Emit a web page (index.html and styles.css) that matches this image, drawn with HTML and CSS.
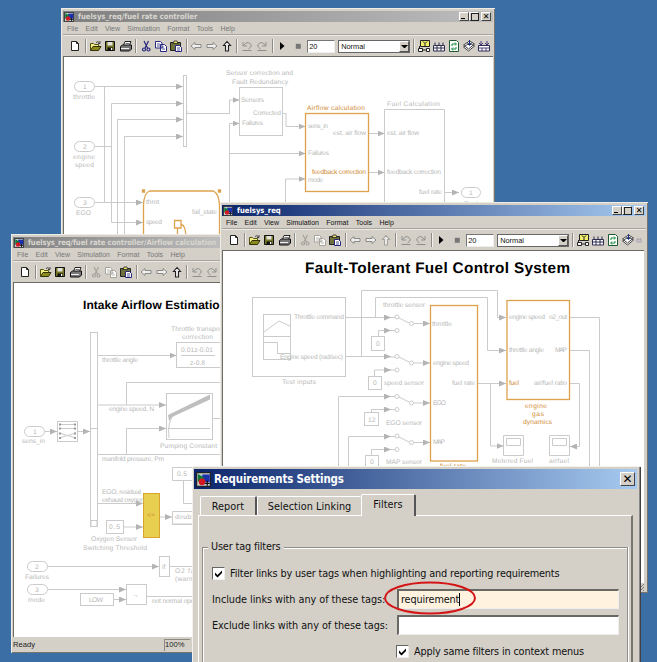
FILE: index.html
```html
<!DOCTYPE html>
<html lang="en">
<head>
<meta charset="utf-8">
<title>Requirements Settings</title>
<link rel="stylesheet" href="styles.css">
</head>
<body>
<svg class="sprite" width="0" height="0">
  <defs>
    <marker id="arr" viewBox="0 0 7 6" refX="7" refY="3" markerWidth="7" markerHeight="6" markerUnits="userSpaceOnUse" orient="auto"><path d="M0 0L7 3L0 6Z" fill="#b4b4b4"/></marker>
    <symbol id="logo" viewBox="0 0 12 12"><path d="M.5.5h11v11H.5z" fill="#c8d0d0" stroke="#222"/><path d="M5 2h6v6H5z" fill="#1c2fae"/><path d="M1.500 1.500L7 4.500L1.500 8Z" fill="#087a38"/><circle cx="4.800" cy="7.800" r="2.700" fill="#d51822"/><path d="M9 7v4M7 9h4" stroke="#111"/></symbol>
    <symbol id="new" viewBox="0 0 14 14"><path d="M3.500 2.500h5l2 2v7h-7z" fill="#fff" stroke="#222"/><path d="M8.500 2.500v2h2" fill="none" stroke="#222"/></symbol>
    <symbol id="open" viewBox="0 0 14 14"><path d="M2.500 11V4.500h3l1 1h4V7" fill="#f5ef8a" stroke="#55550a"/><path d="M2.500 11.500L5 7.500h8l-2.500 4z" fill="#8d8b1c" stroke="#33330a"/><path d="M8 3.500q2-2 3.500.5M12 2v2.500h-2" fill="none" stroke="#222" stroke-width=".8"/></symbol>
    <symbol id="save" viewBox="0 0 14 14"><path d="M2.500 2.500h9v9h-9z" fill="#75752a" stroke="#111"/><path d="M4.500 3h5v3.500h-5z" fill="#e4e4dc"/><path d="M4.500 8.500h5.500v3H4.500z" fill="#111"/><path d="M8 9h1.300v2H8z" fill="#fff"/></symbol>
    <symbol id="print" viewBox="0 0 14 14"><path d="M4.500 6.500l1.500-4h6l-1.500 4" fill="#fff" stroke="#222"/><path d="M6.500 4.500h4" stroke="#333" stroke-width=".7"/><path d="M1.500 7.500l2-1.500h9v4l-2 2h-9z" fill="#777" stroke="#111"/><path d="M2 9.500h8" stroke="#eee"/></symbol>
    <symbol id="cut" viewBox="0 0 14 14"><path d="M5 2l3.500 7M9.500 2L6 9" stroke="currentColor" fill="none" stroke-width="1.200"/><circle cx="5" cy="10.500" r="1.500" fill="none" stroke="currentColor" stroke-width="1.200"/><circle cx="9.500" cy="10.500" r="1.500" fill="none" stroke="currentColor" stroke-width="1.200"/></symbol>
    <symbol id="copy" viewBox="0 0 14 14"><path d="M1.500 2.500h5l1.500 1.500v5h-6.500zM6.500 5.500h4l2 2v5h-6z" fill="#fff" stroke="currentColor"/><path d="M3 5h3M3 7h3M8 8h2M8 10h3" stroke="currentColor" stroke-width=".8"/></symbol>
    <symbol id="paste" viewBox="0 0 14 14"><path d="M1.500 3.500h10v8h-10z" fill="#6f6f3b" stroke="#222"/><path d="M4 4.500L5 2h3l1 2.500z" fill="#e8e26a" stroke="#222" stroke-width=".8"/><path d="M6.500 6.500h4l2 2v4h-6z" fill="#fff" stroke="#26267e"/><path d="M8 9h3M8 11h3" stroke="#26267e" stroke-width=".8"/></symbol>
    <symbol id="left" viewBox="0 0 14 14"><path d="M2 7l4-3.500v2h6v3H6v2z" fill="#eee" stroke="#8a8a86" stroke-width="1"/></symbol>
    <symbol id="right" viewBox="0 0 14 14"><path d="M12 7L8 3.500v2H2v3h6v2z" fill="#eee" stroke="#8a8a86" stroke-width="1"/></symbol>
    <symbol id="up" viewBox="0 0 14 14"><path d="M7 2.500L3.500 6.500h2v5.500h3V6.500h2z" fill="#eee" stroke="currentColor" stroke-width="1.100"/></symbol>
    <symbol id="undo" viewBox="0 0 14 14"><path d="M3 3v4h4M3.500 6.500Q7 2 10 4.500T8.500 10M2.500 11.500h9" fill="none" stroke="#8f8f8b"/></symbol>
    <symbol id="redo" viewBox="0 0 14 14"><path d="M11 3v4H7M10.500 6.500Q7 2 4 4.500T5.500 10M2.500 11.500h9" fill="none" stroke="#8f8f8b"/></symbol>
    <symbol id="play" viewBox="0 0 14 14"><path d="M5 3l4.500 4L5 11z" fill="#000"/></symbol>
    <symbol id="stop" viewBox="0 0 14 14"><path d="M4.800 4.800h5v5h-5z" fill="#777"/></symbol>
    <symbol id="lib" viewBox="0 0 14 14"><path d="M3.500 1.500h9v6h-9z" fill="#f4ef6a" stroke="#222"/><path d="M6 2.500l2 2 2-2M8 4.500V7M2.500 7v3" fill="none" stroke="#222"/><path d="M1.500 9.500h4v3h-4zM9.500 9.500h3v3h-3z" fill="#fff" stroke="#222"/><path d="M5.500 11h4" stroke="#222"/></symbol>
    <symbol id="build" viewBox="0 0 14 14"><path d="M1.500 6.500h11v5.500h-11z" fill="#fff" stroke="#2c2c52"/><path d="M1.500 9h11M5 6.500V12M9 6.500V12M3 3.500v3M7 3.500v3M11 3.500v3" stroke="#2c2c52" fill="none"/></symbol>
    <symbol id="refresh" viewBox="0 0 14 14"><path d="M2.500 1.500h7l2 2v9h-9z" fill="#fff" stroke="#1c5a30"/><path d="M5 7V5h4M8 3.500L9.500 5 8 6.500M9 8v2H5M6 8.500L4.500 10 6 11.500" fill="none" stroke="#128a38"/></symbol>
    <symbol id="model" viewBox="0 0 14 14"><path d="M1.500 8l5 4 6-5-5-3zM1.500 6l5 4 6-5-5-3z" fill="#fff" stroke="#444"/><path d="M7.500 1v5M5.500 4.500l2 2 2-2" stroke="#1b2f82" fill="none"/></symbol>
    <symbol id="debug" viewBox="0 0 14 14"><path d="M1.500 6.500h11v5.500h-11z" fill="#fff" stroke="#2c2c52"/><path d="M1.500 9h11M5 9v3M9 9v3M4 2v4M2 4l2 2 2-2M10 2v4M8 4l2 2 2-2" stroke="#4b3c7c" fill="none"/></symbol>
  </defs>
</svg>

<main class="desktop">

<section class="window win-controller inactive">
  <header class="titlebar"><svg class="logo"><use href="#logo"/></svg><h2>fuelsys_req/fuel rate controller</h2>
    <div class="buttons"><i class="min"></i><i class="max"></i><i class="close"></i></div></header>
  <nav class="menu"><span>File</span><span>Edit</span><span>View</span><span>Simulation</span><span>Format</span><span>Tools</span><span>Help</span></nav>
  <div class="toolbar">
    <svg><use href="#new"/></svg><b></b>
    <svg><use href="#open"/></svg><svg><use href="#save"/></svg><svg><use href="#print"/></svg><b></b>
    <svg class="ink"><use href="#cut"/></svg><svg class="ink"><use href="#copy"/></svg><svg><use href="#paste"/></svg><b></b>
    <svg><use href="#left"/></svg><svg><use href="#right"/></svg><svg><use href="#up"/></svg><b></b>
    <svg><use href="#undo"/></svg><svg><use href="#redo"/></svg><b></b>
    <svg><use href="#play"/></svg><svg><use href="#stop"/></svg>
    <span class="time">20</span><span class="mode">Normal<i></i></span><b></b>
    <svg><use href="#lib"/></svg><svg><use href="#build"/></svg><svg><use href="#refresh"/></svg><svg><use href="#model"/></svg><svg><use href="#debug"/></svg>
  </div>
  <div class="canvas">
  <svg class="diagram" width="429" height="190" viewBox="64 57 429 190">
    <g class="wire">
      <rect x="74.500" y="81.500" width="20" height="10" rx="5"/><rect x="74.500" y="141.500" width="20" height="10" rx="5"/><rect x="74.500" y="197.500" width="20" height="10" rx="5"/><rect x="461.500" y="187.500" width="19" height="10" rx="5"/>
      <rect x="183.500" y="75.500" width="3" height="71"/>
      <rect x="239.500" y="87.500" width="43" height="48"/>
      <path d="M384.500 240V109.500h60V240"/>
      <path d="M104.500 86.500v116M95 146.500h16.500M229.500 123v112M187 111v2.500h43M117.500 119v116M124.500 136v99"/>
      <g class="flow">
        <path d="M95 86.500h88"/><path d="M111.500 222V103.500h71.500"/><path d="M117.500 119.500h65.500"/><path d="M124.500 136.500h58.500"/>
        <path d="M229.500 113.500v-13.500h10"/><path d="M229.500 153v-29.500h10"/><path d="M283 113.500h3v13h19.500"/><path d="M229.500 153.500h76"/><path d="M285.500 235v-56h20"/>
        <path d="M369 133.500h15.500"/><path d="M369 172.500h15.500"/><path d="M445 192.500h14"/><path d="M95 202.500h48"/><path d="M111.500 104v118.500h31.500"/>
      </g>
    </g>
    <g class="marked"><rect x="305.500" y="113.500" width="63" height="78"/><path d="M143.500 240V205Q144 193 149.500 191H213.500Q219 194 219.500 205V240M174.500 220.500h6.500v7.500h-6.500zM177.500 228v10M181.500 224.500q4 1 4.500 12"/><path d="M142.500 190h2v2h-2zM218.500 190h2v2h-2z" class="solid"/></g>
    <g class="label">
      <text x="83" y="89">1</text><text x="83" y="149">2</text><text x="83" y="205">3</text><text x="469" y="195">1</text>
      <text x="73" y="99" textLength="22">throttle</text><text x="73" y="159" textLength="22">engine</text><text x="75" y="167" textLength="19">speed</text><text x="76" y="215" textLength="15">EGO</text>
      <text x="226" y="75" textLength="67">Sensor correction and</text><text x="232" y="84" textLength="56">Fault Redundancy</text>
      <text x="241" y="102" textLength="23">Sensors</text><text x="253" y="115" textLength="28">Corrected</text><text x="242" y="125" textLength="21">Failures</text>
      <text x="308" y="128" textLength="20">sens_in</text><text x="333" y="135" textLength="33">est. air flow</text><text x="308" y="155" textLength="21">Failures</text><text x="308" y="182" textLength="15">mode</text>
      <text x="387" y="106" textLength="53">Fuel Calculation</text><text x="387" y="135" textLength="32">est. air flow</text><text x="387" y="174" textLength="54">feedback correction</text><text x="419" y="194" textLength="23">fuel rate</text><text x="464" y="206" textLength="14">Fuel</text>
      <text x="146" y="204" textLength="13">throt</text><text x="146" y="224" textLength="16">speed</text><text x="192" y="214" textLength="25">fail_state</text>
      <g class="hot"><text x="307" y="110" textLength="58">Airflow calculation</text><text x="312" y="174" textLength="54">feedback correction</text></g>
    </g>
  </svg>
  </div>
</section>

<section class="window win-airflow inactive">
  <header class="titlebar"><svg class="logo"><use href="#logo"/></svg><h2>fuelsys_req/fuel rate controller/Airflow calculation</h2></header>
  <nav class="menu"><span>File</span><span>Edit</span><span>View</span><span>Simulation</span><span>Format</span><span>Tools</span><span>Help</span></nav>
  <div class="toolbar">
    <svg><use href="#new"/></svg><b></b>
    <svg><use href="#open"/></svg><svg><use href="#save"/></svg><svg><use href="#print"/></svg><b></b>
    <svg class="off"><use href="#cut"/></svg><svg class="off"><use href="#copy"/></svg><svg><use href="#paste"/></svg><b></b>
    <svg><use href="#left"/></svg><svg><use href="#right"/></svg><svg><use href="#up"/></svg><b></b>
    <svg><use href="#undo"/></svg><svg><use href="#redo"/></svg>
  </div>
  <div class="canvas">
  <svg class="diagram" width="210" height="354" viewBox="14 283 210 354">
    <g class="wire">
      <rect x="90.500" y="332.500" width="7" height="194"/><rect x="176.500" y="342.500" width="60" height="25"/><path d="M181 355.500h34"/>
      <rect x="24.500" y="426.500" width="20" height="10" rx="5"/><rect x="27.500" y="561.500" width="20" height="10" rx="5"/><rect x="27.500" y="584.500" width="20" height="10" rx="5"/>
      <rect x="57.500" y="421.500" width="20" height="20"/><path d="M59 424.500h17M59 428.500h17M59 433l17 5M59 438l17-5M90 428.500h7"/>
      <path d="M59 424.500h2M59 428.500h2M59 433.500h2M59 438h2M74 424.500h2M74 428.500h2M74 433.500h2M74 438h2" class="dots"/>
      <rect x="166.500" y="393.500" width="46" height="46"/><path d="M168 428.500h42M169 438q-2-18 6-24M213 418.500h10M97 454.500h126M126.500 405V382.500H223"/>
      <path d="M168 415L210 394.500v5L172 417l-3 4z" class="fill"/>
      <path d="M220 467.500h-47.500v13H220M183.500 481v22.500H192M220 511.500h-47.500v13H220M192 524h-20"/>
      <rect x="106.500" y="520.500" width="17" height="13"/><rect x="91" y="520.500" width="6" height="6"/><rect x="159.500" y="556.500" width="10" height="20"/><path d="M170 566.500h30M147 596.500h53"/>
      <rect x="126.500" y="584.500" width="20" height="20"/><rect x="80.500" y="593.500" width="33" height="12"/>
      <g class="flow"><path d="M97 355.500h79.500"/><path d="M45 431.500h12"/><path d="M78 431.500h12"/><path d="M97 405h69"/><path d="M126.500 454V428.500H166"/><path d="M97 503.500h46"/><path d="M160 517h12"/><path d="M124 527h19"/><path d="M48 566.500h111"/><path d="M48 589.500h78"/><path d="M114 599.500h12"/></g>
    </g>
    <rect x="143.500" y="493.500" width="16" height="44" class="yellow"/>
    <text class="heading" x="83" y="309" textLength="144" font-size="12">Intake Airflow Estimation</text>
    <g class="label">
      <text x="102" y="362" textLength="36">throttle angle</text><text x="171" y="331" textLength="53">Throttle transport</text><text x="182" y="339" textLength="31">correction</text>
      <text x="181" y="352" textLength="32">0.01z-0.01</text><text x="190" y="365" textLength="15">z-0.8</text>
      <text x="33" y="434">1</text><text x="35" y="569">2</text><text x="35" y="592">3</text>
      <text x="22" y="443" textLength="23">sens_in</text><text x="109" y="411" textLength="45">engine speed, N</text><text x="160" y="448" textLength="57">Pumping Constant</text><text x="102" y="461" textLength="62">manifold pressure, Pm</text>
      <text x="177" y="476" textLength="10">0.5</text><text x="102" y="494" textLength="39">EGO, residual</text><text x="102" y="502" textLength="42">exhaust oxygen</text><text x="175" y="519" textLength="22">double</text>
      <text x="109" y="529" textLength="11">0.5</text><text x="91" y="541" textLength="46">Oxygen Sensor</text><text x="83" y="550" textLength="64">Switching Threshold</text>
      <text x="25" y="579" textLength="24">Failures</text><text x="28" y="602" textLength="17">mode</text><text x="89" y="602" textLength="14">LOW</text><text x="162" y="569">if</text><text x="132" y="597">→</text>
      <text x="175" y="573" textLength="24">O2 fail</text><text x="175" y="581" textLength="30">(warmup)</text><text x="152" y="603" textLength="58">not normal operation</text>
      <g class="hot"><text x="147" y="517">&lt;=</text></g>
    </g>
  </svg>
  </div>
  <footer class="status"><span>Ready</span><span class="zoom">100%</span></footer>
</section>

<section class="window win-root">
  <header class="titlebar"><svg class="logo"><use href="#logo"/></svg><h2>fuelsys_req</h2>
    <div class="buttons"><i class="min"></i><i class="max"></i><i class="close"></i></div></header>
  <nav class="menu"><span>File</span><span>Edit</span><span>View</span><span>Simulation</span><span>Format</span><span>Tools</span><span>Help</span></nav>
  <div class="toolbar">
    <svg><use href="#new"/></svg><b></b>
    <svg><use href="#open"/></svg><svg><use href="#save"/></svg><svg><use href="#print"/></svg><b></b>
    <svg class="off"><use href="#cut"/></svg><svg class="off"><use href="#copy"/></svg><svg><use href="#paste"/></svg><b></b>
    <svg><use href="#left"/></svg><svg><use href="#right"/></svg><svg class="off"><use href="#up"/></svg><b></b>
    <svg><use href="#undo"/></svg><svg><use href="#redo"/></svg><b></b>
    <svg><use href="#play"/></svg><svg><use href="#stop"/></svg>
    <span class="time">20</span><span class="mode">Normal<i></i></span><b></b>
    <svg><use href="#lib"/></svg><svg><use href="#build"/></svg><svg><use href="#refresh"/></svg><svg><use href="#model"/></svg><svg class="partial"><use href="#debug"/></svg>
  </div>
  <div class="canvas">
  <svg class="diagram" width="421" height="330" viewBox="223 251 421 330">
    <g class="wire">
      <rect x="252.500" y="297.500" width="93" height="79"/><rect x="263.500" y="314.500" width="27" height="45"/><path d="M263.500 336.500h27M264 332l15-11 11 5M264 342.500h13.500v11h13"/>
      <path d="M338.500 480V396.500h47M348.500 480V436.500h37M589.500 480V350.500H570M599.500 480V317.500H570"/>
      <rect x="371.500" y="336.500" width="13" height="14"/><rect x="368.500" y="376.500" width="13" height="13"/><rect x="364.500" y="412.500" width="14" height="13"/><rect x="365.500" y="455.500" width="13" height="14"/>
      <path d="M389 317.500h6M399 318l10 5M389 330.500h6M389 357h6M399 357l10 5M389 370h6M389 396.500h6M399 397l10 5M389 409.500h6M389 436.500h6M399 437l10 5M389 449.500h6"/>
      <circle cx="397" cy="317" r="2"/><circle cx="411.500" cy="323.500" r="2"/><circle cx="397" cy="330.500" r="2"/><circle cx="397" cy="356.500" r="2"/><circle cx="411.500" cy="363" r="2"/><circle cx="397" cy="370" r="2"/><circle cx="397" cy="396.500" r="2"/><circle cx="411.500" cy="403" r="2"/><circle cx="397" cy="409.500" r="2"/><circle cx="397" cy="436" r="2"/><circle cx="411.500" cy="442.500" r="2"/><circle cx="397" cy="449.500" r="2"/>
      <path d="M503.500 435.500h20v20h-20zM506.500 438.500h14v7h-14zM549.500 435.500h20v20h-20zM552.500 438.500h14v7h-14z"/>
      <g class="flow">
        <path d="M346 317.500h45"/><path d="M346 356.500h45"/><path d="M375.500 317V297.500H487.500V350.500H506"/><path d="M361.500 356V290.500H497.500V317.500H506"/>
        <path d="M378.500 336v-5.500H391"/><path d="M374.500 376v-6H391"/><path d="M371.500 412v-2.500H391"/><path d="M371.500 455v-5.500H391"/><path d="M383 396.500h8"/><path d="M383 436.500h8"/>
        <path d="M414 323.500h16"/><path d="M414 363h16"/><path d="M414 403h16"/><path d="M414 442.500h16"/>
        <path d="M478 383.500h28"/><path d="M490.500 383v63h13"/><path d="M570 383.500h9.500v63H570"/>
      </g>
    </g>
    <g class="marked"><rect x="430.500" y="305.500" width="47" height="155.500"/><rect x="507" y="300.500" width="62.500" height="99"/></g>
    <text class="heading" x="305" y="273" textLength="265" font-size="15.300">Fault-Tolerant Fuel Control System</text>
    <g class="label">
      <text x="294" y="319" textLength="50">Throttle command</text><text x="280" y="359" textLength="63">Engine speed (rad/sec)</text><text x="282" y="384" textLength="34">Test inputs</text><text x="383" y="307" textLength="42">throttle sensor</text>
      <text x="376" y="346">0</text><text x="373" y="385">0</text><text x="368" y="422">12</text><text x="370" y="464">0</text>
      <text x="384" y="385" textLength="40">speed sensor</text><text x="386" y="425" textLength="36">EGO sensor</text><text x="386" y="464" textLength="36">MAP sensor</text>
      <text x="432" y="326" textLength="20">throttle</text><text x="433" y="365" textLength="36">engine speed</text><text x="452" y="385" textLength="23">fuel rate</text><text x="433" y="405" textLength="13">EGO</text><text x="433" y="444" textLength="12">MAP</text>
      <text x="509" y="319" textLength="36">engine speed</text><text x="549" y="319" textLength="18">o2_out</text><text x="509" y="352" textLength="35">throttle angle</text><text x="555" y="352" textLength="12">MAP</text><text x="534" y="385" textLength="33">air/fuel ratio</text>
      <text x="492" y="463" textLength="41">Metered Fuel</text><text x="549" y="463" textLength="20">airfuel</text>
      <g class="hot"><text x="509" y="385" textLength="10">fuel</text><text x="525" y="408" textLength="22">engine</text><text x="532" y="416" textLength="12">gas</text><text x="523" y="424" textLength="29">dynamics</text><text x="440" y="468" textLength="26">fuel rate</text></g>
    </g>
  </svg>
  <svg class="grip" width="8" height="8"><path d="M1 8L8 1M4 8l4-4M7 8l1-1" stroke="#777"/></svg>
  </div>
</section>

<section class="window dialog">
  <header class="titlebar"><svg class="logo"><use href="#logo"/></svg><h1>Requirements Settings</h1><div class="buttons"><i class="close"></i></div></header>
  <div class="tabs"><span class="tab t1">Report</span><span class="tab t2">Selection Linking</span><span class="tab t3 active">Filters</span></div>
  <div class="panel">
    <fieldset>
      <legend>User tag filters</legend>
      <div class="row"><i class="check"><svg viewBox="0 0 9 9"><path d="M1 3.500L3.500 6L8 1.500V4L3.500 8.500L1 6Z"/></svg></i><span class="txt long">Filter links by user tags when highlighting and reporting requirements</span></div>
      <div class="row"><span class="name inc">Include links with any of these tags:</span><span class="field current"><span>requirement</span><em></em></span></div>
      <div class="row"><span class="name">Exclude links with any of these tags:</span><span class="field"></span></div>
      <div class="row last"><i class="check"><svg viewBox="0 0 9 9"><path d="M1 3.500L3.500 6L8 1.500V4L3.500 8.500L1 6Z"/></svg></i><span class="txt">Apply same filters in context menus</span></div>
    </fieldset>
  </div>
  <svg class="ring" width="94" height="36"><ellipse cx="47" cy="18" rx="45" ry="15.500"/></svg>
</section>
</main>
</body>
</html>
```
FILE: styles.css
```css
* { box-sizing: border-box; }
body { margin: 0; background: #3a6ea5; overflow: hidden; }
.sprite { position: absolute; }
.desktop { position: relative; width: 657px; height: 662px; overflow: hidden; background: #3a6ea5; }
i, em, b { font-style: normal; display: block; }

.window { position: absolute; display: flex; flex-direction: column; background: #d4d0c8; padding: 3px 2px 2px; box-shadow: inset 1px 1px #eeece6, inset -1px -1px #77756f; font-family: "Liberation Sans", sans-serif; overflow: hidden; }
.win-controller { left: 61px; top: 8px; width: 434px; height: 240px; }
.win-airflow { left: 11px; top: 234px; width: 212px; height: 419px; }
.win-root { left: 220px; top: 202px; width: 428px; height: 391px; }
.dialog { left: 192px; top: 466px; width: 449px; height: 210px; }

.titlebar { display: flex; align-items: center; flex: none; height: 11px; padding: 0 2px 0 1px; background: linear-gradient(90deg, #0a246a, #a6caf0); color: #fff; }
.inactive .titlebar { background: linear-gradient(90deg, #808080, #bdbdbd); color: #d9d6cf; }
.titlebar h1, .titlebar h2 { margin: 0; flex: 1; white-space: nowrap; font: bold 7.6px "DejaVu Sans Condensed", "DejaVu Sans", sans-serif; font-stretch: condensed; }
.win-airflow .titlebar h2 { letter-spacing: -.1px; }
.logo { width: 10px; height: 10px; margin-right: 4px; flex: none; }
.buttons { display: flex; }
.buttons i { position: relative; width: 10px; height: 9px; background: #d4d0c8; border: 1px solid; border-color: #fff #444 #444 #fff; }
.buttons .close { margin-left: 2px; }
.min::after { content: ""; display: block; width: 4px; height: 1px; margin: 5px 0 0 1px; background: #000; }
.max::after { content: ""; display: block; width: 6px; height: 6px; margin: 0 0 0 1px; border: 1px solid #222; }
.close::after { content: "✕"; display: block; color: #000; font: bold 8px/7px "DejaVu Sans", sans-serif; text-align: center; }

.menu { display: flex; flex: none; height: 13px; padding-left: 4px; gap: 7.3px; font-size: 7px; line-height: 14px; color: #111; border-bottom: 1px solid #a7a49d; }
.inactive .menu { color: #777; }
.toolbar { display: flex; flex: none; align-items: center; height: 21px; padding-left: 4.500px; border-top: 1px solid #eceae4; overflow: hidden; }
.toolbar > svg { flex: none; width: 14px; height: 14px; margin: 0 .6px; color: #222; }
.toolbar .ink { color: #26267e; }
.toolbar .off { color: #a5a29c; }
.toolbar .partial { width: 6px; opacity: .5; }
.toolbar .partial use { width: 14px; height: 14px; }
.toolbar b { flex: none; width: 5px; height: 14px; background: linear-gradient(90deg, transparent 2px, #8e8c86 2px 3px, #f4f2ee 3px 4px, transparent 4px); }
.time, .mode { flex: none; height: 13px; background: #fff; border: 1px solid #777; border-right-color: #eee; border-bottom-color: #eee; font-size: 7.4px; line-height: 11px; padding-left: 1px; color: #111; }
.time { width: 28px; margin-left: 2px; }
.mode { display: flex; justify-content: space-between; width: 72px; margin: 0 1px 0 3px; padding: 0 0 0 2px; border-color: #666; }
.mode i { width: 10px; background: #d4d0c8; border: 1px solid; border-color: #fff #555 #555 #fff; }
.mode i::after { content: ""; display: block; margin: 3px 0 0 1px; border: 3px solid transparent; border-top-color: #000; border-bottom: 0; }
.canvas { flex: 1; position: relative; min-height: 0; background: #fff; border: solid #6d6b66; border-width: 1px 0 0 1px; overflow: hidden; }
.win-root .canvas { margin-right: 2px; }
.diagram { display: block; }
.grip { position: absolute; right: 0; bottom: 0; background: #d4d0c8; }
.status { display: flex; justify-content: space-between; flex: none; height: 14px; padding: 0 31px 0 0; font-size: 7.6px; line-height: 15px; color: #222; }
.zoom { width: 26px; height: 12px; margin-top: 2px; padding-left: 1px; line-height: 12px; box-shadow: inset 1px 1px #8b8982; }

.wire { fill: none; stroke: #cbcbcb; stroke-width: 1; }
.flow path { marker-end: url(#arr); }
.wire .fill { fill: #bfbfbf; stroke: none; }
.wire .dots { stroke: #999; stroke-width: 2; }
.marked { fill: none; stroke: #dda24e; stroke-width: 1.300; }
.marked .solid { fill: #c98a30; }
.yellow { fill: #e8cf50; stroke: #d8a42e; }
.label { font: 6.7px "Liberation Sans", sans-serif; fill: #b8b8b8; text-rendering: geometricPrecision; }
.hot { fill: #cf8a35; }
.heading { font-family: "Liberation Sans", sans-serif; font-weight: bold; fill: #000; text-rendering: geometricPrecision; }

.dialog { padding: 3px 4px 0 2px; font-family: "DejaVu Sans Condensed", "DejaVu Sans", sans-serif; font-stretch: condensed; font-size: 10.8px; letter-spacing: -.15px; color: #111; overflow: visible; box-shadow: inset 1px 1px #f4f2ee, inset -1px 0 #404040, inset -2px 0 #888; }
.dialog .titlebar { height: 20px; padding: 0 2px; }
.dialog .titlebar h1 { font-size: 11.4px; letter-spacing: -.15px; }
.dialog .logo { width: 15px; height: 15px; margin-right: 3px; }
.dialog .close { width: 15px; height: 14px; }
.dialog .close::after { font-size: 12px; line-height: 12px; }
.tabs { display: flex; align-items: flex-end; height: 26px; padding-left: 6px; flex: none; }
.tab { height: 19px; padding-top: 3px; text-align: center; white-space: nowrap; border: 1px solid #fff; border-right: 2px solid #555; border-bottom: 0; border-radius: 2px 2px 0 0; line-height: 14px; letter-spacing: .05px; }
.t1 { width: 57px; }
.t2 { width: 104px; border-right: 0; }
.t3 { width: 55px; height: 22px; margin-bottom: -1px; background: #d4d0c8; position: relative; }
.panel { flex: 1; margin: 0 4px; padding: 31px 3px 0; border: 1px solid #fff; border-right: 2px solid #77756f; border-bottom: 0; }
fieldset { position: relative; height: 130px; margin: 0; padding: 31px 0 0 9px; border: 1px solid #8f8d87; box-shadow: inset 1px 1px #fff, 1px 0 #fff; }
legend { position: absolute; left: 5px; top: -9px; padding: 0 3px; background: #d4d0c8; line-height: 16px; white-space: nowrap; }
.row { display: flex; align-items: center; height: 26px; margin-top: 0; white-space: nowrap; }
.row:first-of-type { margin-top: -19px; }
.check { width: 13px; height: 13px; background: #fff; border: 1px solid; border-color: #666 #eee #eee #666; padding: 1px; }
.check svg { display: block; width: 9px; height: 9px; }
.txt { margin-left: 5px; }
.name { width: 185px; }
.inc, .name { letter-spacing: -.05px; }
.field { display: flex; align-items: center; width: 222px; height: 20px; padding-left: 2px; background: #fff; border: 1px solid; border-width: 2px 1px 1px 2px; border-color: #6a6862 #eee #eee #6a6862; }
.current { background: #fff3e0; }
.current em { width: 1px; height: 13px; background: #000; }
.last { padding-left: 184px; }
.ring { position: absolute; left: 191px; top: 114px; }
.ring ellipse { fill: none; stroke: #d41515; stroke-width: 2; }
```
